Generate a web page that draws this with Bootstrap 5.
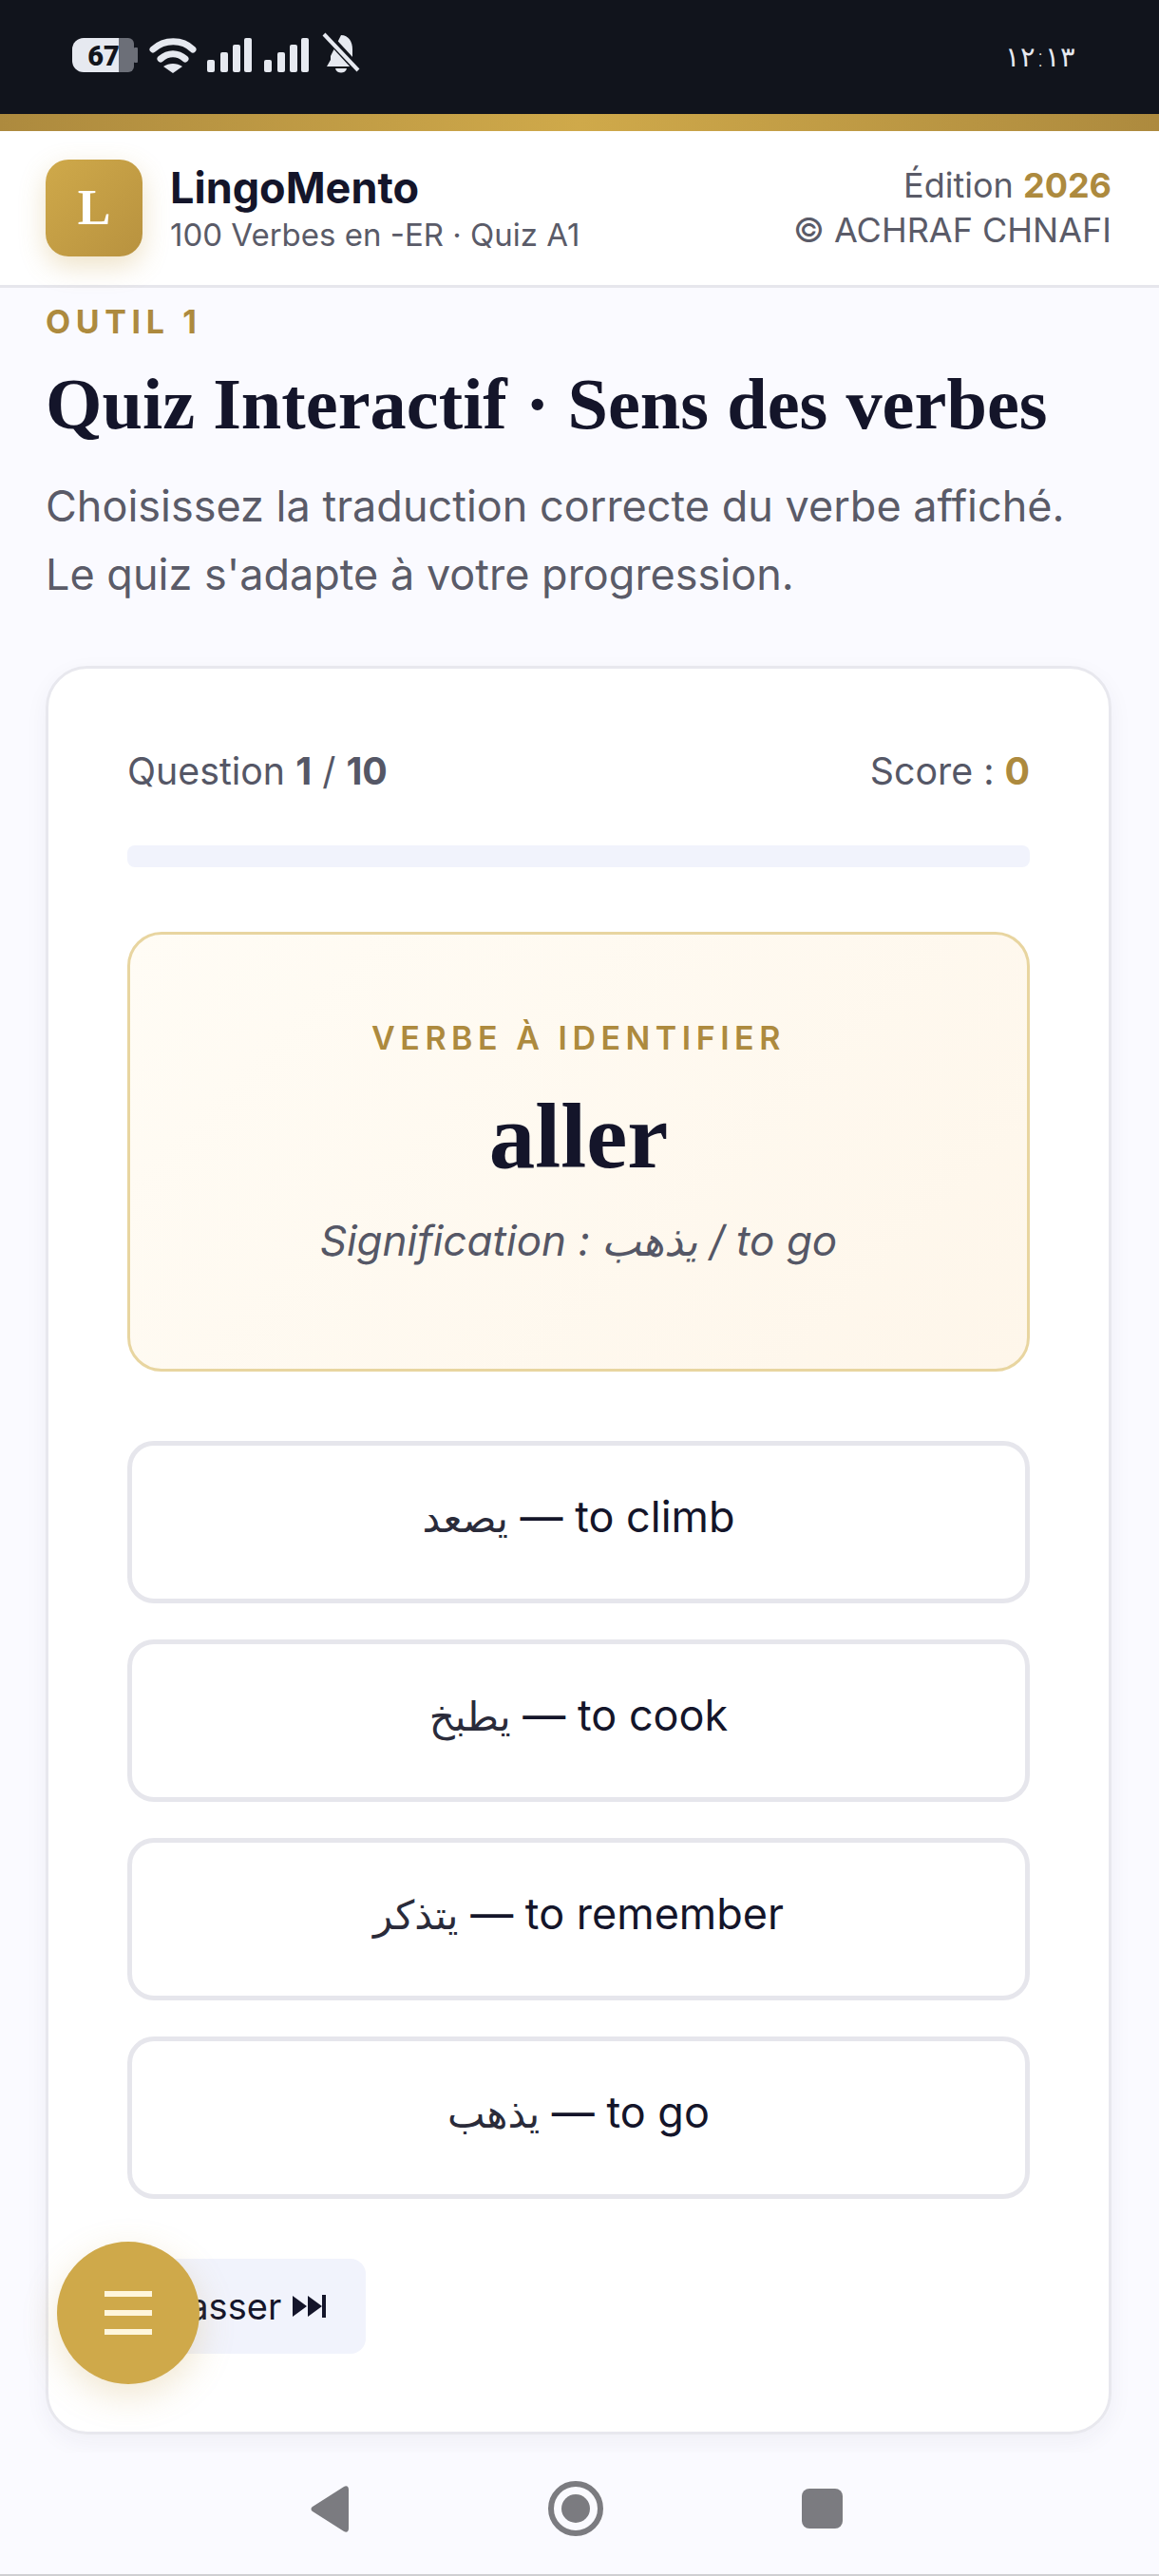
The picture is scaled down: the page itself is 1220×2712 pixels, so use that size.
<!DOCTYPE html>
<html lang="fr">

<head>
    <meta charset="UTF-8">
    <meta name="viewport" content="width=device-width, initial-scale=1.0">
    <title>LingoMento - Quiz A1</title>
    <link href="https://cdn.jsdelivr.net/npm/bootstrap@5.3.1/dist/css/bootstrap.min.css" rel="stylesheet">
    <style>
        html, body { height: 2712px; overflow: hidden; }
        body { background: #fafaff; font-family: Inter, "DejaVu Sans", sans-serif; color: #14152a; position: relative; }

        .status-bar { height: 120px; background: #11141c; color: #e6e9f0; padding: 0 88px 0 76px; }
        .status-bar svg { margin-top: -6px; }
        .status-time { font-family: "DejaVu Sans", sans-serif; font-size: 29px; font-weight: 200; margin-top: 2px; }
        .gold-strip { height: 18px; background: linear-gradient(90deg, #ad8a3e, #cfa94a 50%, #ad8a3e); }

        .app-header { height: 165px; background: #fff; border-bottom: 3px solid #e6e6ec; padding: 0 50px 0 48px; }
        .brand-row { gap: 29px; }
        .logo-box { width: 102px; height: 102px; border-radius: 24px; background: linear-gradient(135deg, #cfa94a, #b8923f); box-shadow: 0 10px 28px rgba(200, 160, 70, .3); color: #fff; font-family: "Liberation Serif", serif; font-weight: 700; font-size: 52px; }
        .brand-name { font-size: 45px; font-weight: 700; line-height: 54px; padding-top: 2px; }
        .brand-sub { font-size: 33px; line-height: 44px; color: #5a5b68; }
        .edition-box { font-size: 36px; line-height: 47px; color: #5a5b68; }
        .gold-text { color: #ad8a3e; }

        .page-main { padding: 16px 50px 0 48px; }
        .tool-label { font-size: 34px; font-weight: 700; letter-spacing: 5.6px; line-height: 40px; }
        .page-title { font-family: "Liberation Serif", serif; font-weight: 700; font-size: 76.4px; line-height: 96px; margin: 19px 0 23px; color: #14152a; white-space: nowrap; }
        .page-intro { font-size: 45px; line-height: 72px; color: #5a5b68; margin-bottom: 60px; }

        .quiz-card { height: 1862px; border: 3px solid #e8e8ee; border-radius: 44px; padding: 83px 83px 0; box-shadow: 0 8px 24px rgba(30, 30, 80, .05); }
        .quiz-meta { font-size: 39.3px; line-height: 50px; color: #555766; }
        .quiz-track { height: 23px; margin-top: 53px; background: #f1f3fc; border-radius: 8px; }
        .verb-box { height: 463px; margin-top: 68px; border: 3px solid #e8d5a0; border-radius: 36px; background: linear-gradient(135deg, #fffcf5, #fef6ea); padding-top: 89px; }
        .verb-label { font-size: 34px; font-weight: 600; letter-spacing: 5.5px; line-height: 40px; }
        .verb-word { font-family: "Liberation Serif", serif; font-weight: 700; font-size: 97px; line-height: 120px; margin-top: 24px; }
        .verb-hint { font-size: 44px; font-style: italic; line-height: 56px; color: #555766; margin-top: 21px; }

        .answer-stack { margin-top: 73px; gap: 38px; }
        .answer-btn { height: 171px; width: 100%; border: 5px solid #e6e6ec; border-radius: 28px; background: #fff; color: #14152a; font-size: 45px; line-height: 56px; padding: 0 0 10px; }
        .answer-btn:hover { border-color: #e6e6ec; background: #fff; color: #14152a; }
        .arabic-text { font-size: 42px; color: #2a2b3a; }

        .skip-btn { height: 100px; margin-top: 63px; padding: 0 41px 0 40px; border: 0; border-radius: 16px; background: #f1f3fc; color: #14152a; font-size: 38px; gap: 12px; }
        .skip-btn:hover { background: #f1f3fc; color: #14152a; }

        .menu-fab { position: absolute; left: 60px; top: 2360px; width: 150px; height: 150px; border-radius: 50%; border: 0; background: #cfa94a; box-shadow: 0 12px 36px rgba(200, 160, 70, .25); gap: 14px; }
        .menu-fab span { width: 50px; height: 6px; background: #fff6dc; }

        .nav-bar { position: absolute; left: 0; right: 0; bottom: 0; height: 130px; background: #fafaff; border-bottom: 2px solid #cfcfd2; }
        .nav-icons { position: absolute; left: 0; top: 0; }
    </style>
</head>

<body>

    <!-- Android status bar -->
    <div class="status-bar d-flex align-items-center justify-content-between">
        <svg width="310" height="50" viewBox="76 32 310 50" fill="#e6e9f0">
            <!-- battery -->
            <path d="M88 40h37v36H88a12 12 0 0 1-12-12V52a12 12 0 0 1 12-12z" />
            <path d="M125 40h10a6 6 0 0 1 6 6v24a6 6 0 0 1-6 6h-10z" fill="#6c6f78" />
            <rect x="141" y="50" width="4" height="16" rx="1" fill="#6c6f78" />
            <text x="109" y="69" text-anchor="middle" font-family="Roboto, sans-serif" font-weight="900" font-size="29" fill="#11141c">67</text>
            <!-- wifi -->
            <path d="M161 52c12-11 31-11 42 0" fill="none" stroke="#e6e9f0" stroke-width="7" stroke-linecap="round" />
            <path d="M169 62c8-7 18-7 26 0" fill="none" stroke="#e6e9f0" stroke-width="7" stroke-linecap="round" />
            <path d="M172 70c6-4 14-4 20 0l-10 7z" />
            <!-- signal 1 -->
            <rect x="218" y="63" width="8" height="13" rx="2" /><rect x="232" y="55" width="8" height="21" rx="2" />
            <rect x="245" y="47" width="8" height="29" rx="2" /><rect x="257" y="40" width="8" height="36" rx="2" />
            <!-- signal 2 -->
            <rect x="278" y="63" width="8" height="13" rx="2" /><rect x="292" y="55" width="8" height="21" rx="2" />
            <rect x="305" y="47" width="8" height="29" rx="2" /><rect x="317" y="40" width="8" height="36" rx="2" />
            <!-- bell muted -->
            <path d="M359 37c8 0 12 7 12 15v11l5 7h-32l4-7v-4l11-22z" />
            <path d="M353 72h12c-1 6-11 6-12 0z" />
            <path d="M340 33l37 40" stroke="#11141c" stroke-width="9" />
            <path d="M341 36l36 38" stroke="#e6e9f0" stroke-width="4" />
        </svg>
        <div class="status-time">۱۲:۱۳</div>
    </div>
    <div class="gold-strip"></div>

    <!-- App header -->
    <header class="app-header d-flex align-items-center justify-content-between">
        <div class="brand-row d-flex align-items-center">
            <div class="logo-box d-flex align-items-center justify-content-center">L</div>
            <div>
                <div class="brand-name">LingoMento</div>
                <div class="brand-sub">100 Verbes en -ER · Quiz A1</div>
            </div>
        </div>
        <div class="edition-box text-end">
            <div>Édition <strong class="gold-text">2026</strong></div>
            <div>© ACHRAF CHNAFI</div>
        </div>
    </header>

    <main class="page-main">
        <div class="tool-label gold-text">OUTIL 1</div>
        <h1 class="page-title">Quiz Interactif · Sens des verbes</h1>
        <p class="page-intro">Choisissez la traduction correcte du verbe affiché.<br>Le quiz s'adapte à votre progression.</p>

        <div class="card quiz-card">
            <div class="quiz-meta d-flex justify-content-between">
                <div>Question <strong>1</strong> / <strong>10</strong></div>
                <div>Score : <strong class="gold-text">0</strong></div>
            </div>
            <div class="quiz-track"></div>

            <div class="verb-box text-center">
                <div class="verb-label gold-text">VERBE À IDENTIFIER</div>
                <div class="verb-word">aller</div>
                <div class="verb-hint">Signification : يذهب / to go</div>
            </div>

            <div class="answer-stack d-flex flex-column">
                <button class="btn answer-btn"><span class="arabic-text">يصعد</span> — to climb</button>
                <button class="btn answer-btn"><span class="arabic-text">يطبخ</span> — to cook</button>
                <button class="btn answer-btn"><span class="arabic-text">يتذكر</span> — to remember</button>
                <button class="btn answer-btn"><span class="arabic-text">يذهب</span> — to go</button>
            </div>

            <div>
                <button class="btn skip-btn d-inline-flex align-items-center">Passer
                    <svg width="36" height="24" viewBox="0 0 36 24" fill="#14152a">
                        <path d="M0 1l15 11L0 23zM16 1l15 11-15 11z" />
                        <rect x="31" y="0" width="4" height="24" />
                    </svg>
                </button>
            </div>
        </div>
    </main>

    <!-- Floating menu button -->
    <button class="menu-fab d-flex flex-column align-items-center justify-content-center" aria-label="Menu">
        <span></span><span></span><span></span>
    </button>

    <!-- Android navigation bar -->
    <div class="nav-bar">
        <svg class="nav-icons" width="1220" height="128" viewBox="0 2582 1220 128" fill="#7b7b80">
            <path d="M362 2618c3-2 5 0 5 3v41c0 3-2 5-5 3l-33-21c-2-1-2-4 0-5z" />
            <circle cx="606" cy="2641" r="26" fill="none" stroke="#7b7b80" stroke-width="6" />
            <circle cx="606" cy="2641" r="15" />
            <rect x="844" y="2620" width="43" height="42" rx="8" />
        </svg>
    </div>

</body>

</html>
